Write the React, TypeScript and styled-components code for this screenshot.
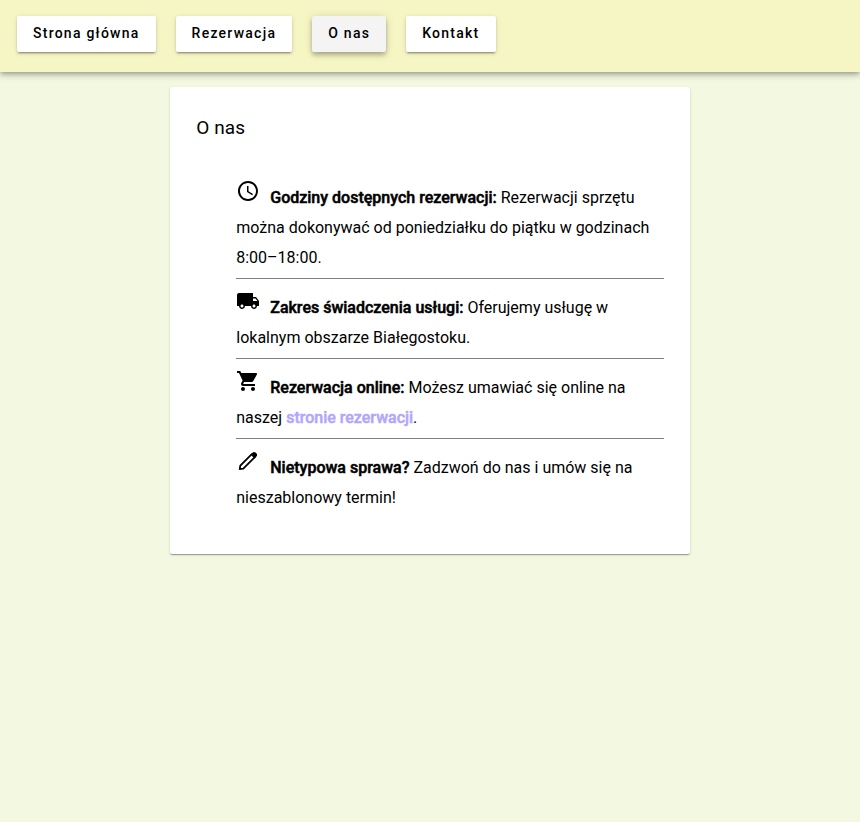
import React from "react";
import styled, { createGlobalStyle } from "styled-components";
import { MdAccessTime, MdLocalShipping, MdShoppingCart } from "react-icons/md";

const GlobalStyle = createGlobalStyle`
  body {
    margin: 0;
    background: #f3f8e0;
    font-family: Roboto, sans-serif;
    color: #000;
  }
`;

const Page = styled.div`
  min-height: 100vh;
  background: #f3f8e0;
`;

const Toolbar = styled.nav`
  display: flex;
  gap: 20px;
  align-items: flex-start;
  box-sizing: border-box;
  height: 72px;
  padding: 16px 17px;
  background: #f6f5c4;
  box-shadow: 0 2px 4px -1px rgba(0, 0, 0, 0.2), 0 4px 5px rgba(0, 0, 0, 0.14),
    0 1px 10px rgba(0, 0, 0, 0.12);
`;

const NavButton = styled.button<{ $active?: boolean }>`
  height: 36px;
  padding: 0 16px 2px;
  border: 0;
  border-radius: 2px;
  background: ${(p) => (p.$active ? "#f4f4f4" : "#fff")};
  color: #000;
  font: 500 14px/34px Roboto, sans-serif;
  letter-spacing: 1.25px;
  white-space: nowrap;
  box-shadow: ${(p) =>
    p.$active
      ? "0 2px 4px -1px rgba(0,0,0,.2), 0 4px 5px rgba(0,0,0,.14), 0 1px 10px rgba(0,0,0,.12)"
      : "0 3px 1px -2px rgba(0,0,0,.2), 0 2px 2px rgba(0,0,0,.14), 0 1px 5px rgba(0,0,0,.12)"};

  &:last-child {
    padding-right: 16.5px;
  }
`;

const Card = styled.main`
  box-sizing: border-box;
  width: 520px;
  height: 467px;
  margin: 15px auto 0;
  padding: 26px 26px 26px 26.25px;
  border-radius: 2px;
  background: #fff;
  box-shadow: 0 2px 1px -1px rgba(0, 0, 0, 0.2), 0 1px 1px rgba(0, 0, 0, 0.14),
    0 1px 3px rgba(0, 0, 0, 0.12);
`;

const Title = styled.h1`
  margin: 0;
  font-size: 19px;
  font-weight: 400;
  line-height: 30px;
  letter-spacing: 0.1px;
`;

const InfoList = styled.ul`
  margin: 26px 0 0;
  padding: 0 0 0 40px;
  list-style: none;
`;

const InfoItem = styled.li`
  padding: 10px 0 5px;
  font-size: 16px;
  line-height: 30px;
  border-bottom: 1px solid gray;

  &:last-child {
    border-bottom: 0;
  }

  svg {
    width: 24px;
    height: 24px;
    margin-right: 10px;
    vertical-align: baseline;
  }
`;

const Strong = styled.strong`
  font-weight: 500;
  -webkit-text-stroke: 0.5px currentColor;
`;

const Link = styled.a`
  color: #b3a6fb;
  font-weight: 500;
  -webkit-text-stroke: 0.5px currentColor;
`;

const PenIcon = () => (
  <svg viewBox="0 0 24 24" fill="none">
    <path
      d="M3.7 20.2l.6-3.5L15.8 5.2l3 3L7.3 19.7z"
      stroke="currentColor"
      strokeWidth="1.8"
      strokeLinejoin="round"
    />
    <path
      d="M14.6 5.6l1.8-1.8a2.4 2.4 0 0 1 3.4 0l.5.5a2.4 2.4 0 0 1 0 3.4l-1.8 1.8z"
      fill="currentColor"
    />
  </svg>
);

const App = () => (
  <Page>
    <GlobalStyle />
    <Toolbar>
      <NavButton>Strona główna</NavButton>
      <NavButton>Rezerwacja</NavButton>
      <NavButton $active>O nas</NavButton>
      <NavButton>Kontakt</NavButton>
    </Toolbar>
    <Card>
      <Title>O nas</Title>
      <InfoList>
        <InfoItem>
          <MdAccessTime />
          <Strong>Godziny dostępnych rezerwacji:</Strong> Rezerwacji sprzętu można dokonywać od
          poniedziałku do piątku w godzinach 8:00–18:00.
        </InfoItem>
        <InfoItem>
          <MdLocalShipping />
          <Strong>Zakres świadczenia usługi:</Strong> Oferujemy usługę w lokalnym obszarze Białegostoku.
        </InfoItem>
        <InfoItem>
          <MdShoppingCart />
          <Strong>Rezerwacja online:</Strong> Możesz umawiać się online na naszej{" "}
          <Link>stronie rezerwacji</Link>.
        </InfoItem>
        <InfoItem>
          <PenIcon />
          <Strong>Nietypowa sprawa?</Strong> Zadzwoń do nas i umów się na nieszablonowy termin!
        </InfoItem>
      </InfoList>
    </Card>
  </Page>
);

export default App;
